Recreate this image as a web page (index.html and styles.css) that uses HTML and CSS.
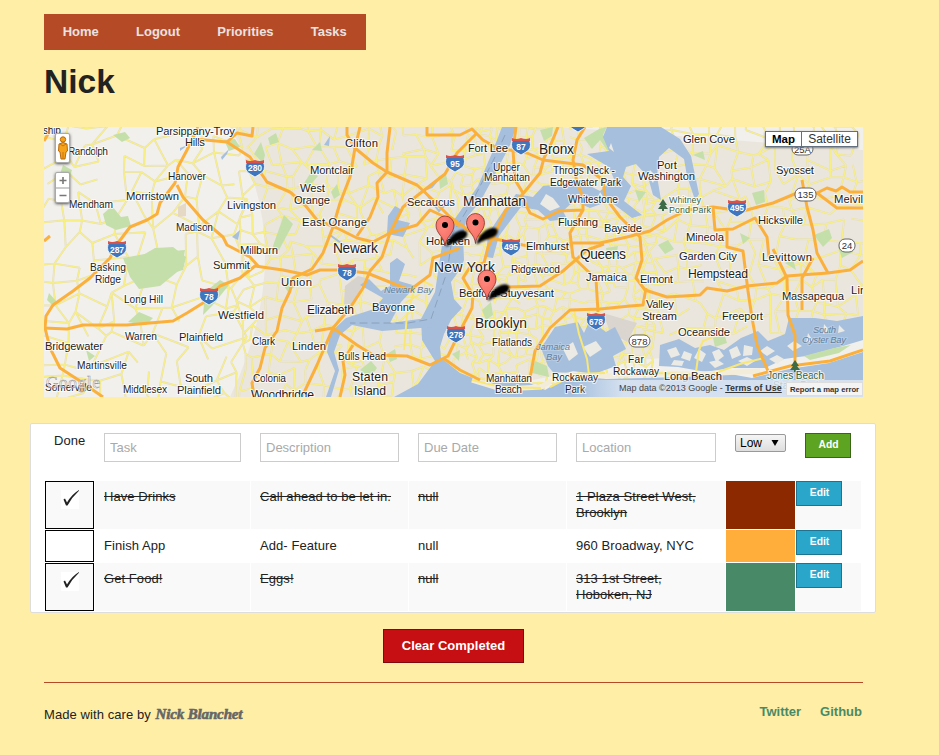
FILE: index.html
```html
<!DOCTYPE html>
<html lang="en">
<head>
<meta charset="utf-8">
<title>Nick</title>
<link rel="stylesheet" href="styles.css">
</head>
<body>
<div class="page">
<nav class="nav"><a>Home</a><a>Logout</a><a>Priorities</a><a>Tasks</a></nav>
<h1>Nick</h1>
<div class="map">
<svg class="map-canvas" width="819" height="270" viewBox="44 127 819 270">
<defs>
<radialGradient id="marker" cx=".4" cy=".3" r=".8"><stop offset="0" stop-color="#ff8c80"/><stop offset="1" stop-color="#f4645b"/></radialGradient>
<filter id="soft"><feGaussianBlur stdDeviation=".8"/></filter>
<g id="shield"><path d="M-9-4Q-6-6-4-5Q0-7 4-5Q6-6 9-4Q11 4 5 7L0 10L-5 7Q-11 4-9-4Z" fill="#3f76bd" stroke="#fff" stroke-width=".8"/><path d="M-9-7Q-5-5 0-7Q5-5 9-7L9-4H-9Z" fill="#d8524c"/></g>
<g id="pin"><path d="M1 1Q2-7 10-13Q18-18 22-14Q24-8 14-5Q7-3 1 1Z" fill="#000" filter="url(#soft)"/><path d="M0 0C-1-10-9-12-9-21A9 9 0 0 1 9-21C9-12 1-10 0 0Z" fill="url(#marker)" stroke="#8e302b" stroke-width=".8"/><circle cy="-21" r="3" fill="#000"/></g>
<path id="tree" d="M0-6L4 0H2L5 4H1V6H-1V4H-5L-2 0H-4Z" fill="#3c6b45"/>
</defs>
<rect x="44" y="127" width="819" height="270" fill="#f2f0ec"/>
<path d="M230 127H560L863 150V340L640 360L440 397H230Q300 250 230 127Z" fill="#ebe6dd"/>
<g id="minor" class="minor"></g>
<g class="park">
<path d="M103 214L112 206L121 217L128 216L131 226L116 230L106 225Z"/><path d="M123 258L150 253L185 250L182 268L160 286L139 289L130 277Z"/><path d="M138 258L155 248L173 247L186 257L183 270L150 280Z"/>
<path d="M224 140L235 139L240 147L229 151Z"/><path d="M254 154L261 142L265 155L263 163Z"/><path d="M275 240L284 215L293 224L279 250L270 255Z"/><path d="M63 165L72 170L70 176L60 174Z"/><path d="M113 135L125 132L130 138L122 142Z"/>
<path d="M49 293L56 301L54 307L47 300Z"/><path d="M86 350L95 356L89 361Z"/><path d="M128 322L139 312L153 318L146 325Z"/><path d="M205 292L220 280L229 285L212 306L203 315Z"/><path d="M303 185L311 172L318 176L307 189Z"/><path d="M268 138L276 133L279 142L270 145Z"/>
<path d="M284 286L290 279L296 286L288 292Z"/><path d="M312 150L320 142L322 151Z"/><path d="M331 192L337 184L340 195L334 199Z"/><path d="M439 178L446 174L448 184L440 189Z"/><path d="M540 130L553 127L552 136L544 141Z"/><path d="M584 138L599 129L607 127L603 135L613 152L607 150L600 140L592 149Z"/><path d="M482 310L491 302L493 315L486 320Z"/><path d="M360 370L371 361L377 368L370 378Z"/><path d="M387 354L395 349L397 359L390 362Z"/><path d="M452 354L460 350L459 361Z"/><path d="M635 190L646 192L639 202Z"/><path d="M752 193L764 190L765 202L756 205Z"/><path d="M814 235L829 229L832 238L823 247Z"/><path d="M713 338L724 333L727 343L715 347Z"/><path d="M785 263L793 259L796 270Z"/><path d="M740 233L750 238L743 244Z"/><path d="M693 155L703 151L705 160Z"/><path d="M838 247L851 243L853 252L842 258Z"/><path d="M658 245L668 240L674 249L665 254Z"/><path d="M606 248L618 246L616 257L607 257Z"/>
</g>
<path d="M345 286L358 276L366 278L350 309L344 304Z" fill="#d6d2ce"/><path d="M603 313L637 323L627 342L610 332Z" fill="#dad5ce"/><path d="M178 207L186 203L186 216L178 217Z" fill="#e5d9c5"/>
<g class="water">
<path d="M502 127H516L510 145L493 178L480 202L467 217L463 236L464 260L461 268L451 282L454 299L462 308L451 320L444 334L440 347L441 358L460 373L483 382L529 383L545 390L573 374L606 379L682 377L730 374L752 378L789 369L829 363L863 352V397H394L418 384L435 361L422 340L421 319L435 292L442 245L454 220L478 186L492 153Z"/>
<path d="M360 285L369 279L381 291L390 286L390 263L397 258L405 264L399 281L416 286L401 302L390 323L434 317L433 327L382 331L352 325L340 335L334 352L339 370L331 397H326L335 371L327 352L330 333L346 318L374 309L383 298Z"/>
<path d="M607 127H661L680 139L691 156L699 194L695 200L687 176L684 159L669 148L659 157L657 176L661 200L653 195L648 177L636 164L626 167L623 177L631 186L624 201L642 215L632 218L611 202L601 204L590 208L574 201L563 211L567 219L550 221L538 210L521 207L511 220L499 236L493 258L486 257L488 234L504 210L516 194L533 197L543 186L562 184L580 181L600 191L614 179L609 167L587 154L609 151L603 137Z"/>
<path d="M555 327L578 322L584 333L590 320L606 332L615 327L626 349L613 356L616 366L594 374L573 371L556 376L548 366L541 348Z"/>
<path d="M388 216L395 206L402 210L398 220L410 223L403 237L387 234Z"/><path d="M221 157L229 149L227 154L222 160Z"/><path d="M232 237L240 230L238 240Z"/><path d="M324 145L330 136L329 146Z"/><path d="M180 148L188 145L180 151Z"/>
<path d="M660 345L679 339L695 348L710 345L724 350L741 338L758 331L768 341L785 334L789 318L815 318L837 321L863 316V340L843 346L806 356L784 359L765 368L730 368L706 372L678 367L659 366Z"/>
</g>
<path d="M440 177L432 187L424 190L432 202L439 211L447 203M330 235L345 246" fill="none" stroke="#a5bfdd" stroke-width="2"/>
<g class="islands"><path d="M540 204L546 194L553 198L560 207L550 211Z"/><path d="M563 349L573 342L578 354L569 361Z"/><path d="M583 347L596 341L602 349L590 357Z"/><path d="M667 350l9-3 4 8-9 3zM684 351l8 3-2 7-9-3zM699 349l7 5-4 8-8-4zM712 352l7-3 5 7-8 6zM729 350l8-4 4 9-9 4zM744 345l9 2-1 8-9 1zM760 351l7-5 8 5-8 5zM674 360l10 1-2 5-11-1zM709 362l9-2 6 4-9 4zM738 361l9-4 8 4-8 5zM769 359l8-4 7 4-7 5zM787 346l7-5 8 5-9 5zM808 333l5 8-7 2zM824 324l6 7-7 3zM839 325l6 6-7 2z"/><path d="M600 192L604 198L598 198ZM611 143l3 9-5-4zM650 170l6 6-3 7-5-7z"/></g>
<path class="park" d="M804 356L834 348L851 345L839 353L810 360Z"/><path class="park" d="M535 361L547 366L549 377L532 373Z"/>
<path d="M472 380L501 389L541 387L560 375L602 376L650 373L700 374L760 371" fill="none" stroke="#f3ecd9" stroke-width="5"/>
<path d="M472 380L501 387L541 388M550 387L575 374L605 373M655 373L710 375L740 364L764 358M720 334L703 341L699 350L696 372M574 310L579 334L587 359L589 375M416 285L407 315L404 350M423 281L433 286M405 303L420 294" class="secondary"/>
<path d="M505 135L494 159L473 200L453 233L447 272L431 319L408 323L350 323" class="boundary"/>
<g class="highway">
<path d="M198 127L187 150L178 167L175 183L160 203L157 214L147 220L130 227L118 243L110 258L90 278L73 291L53 305L46 316L45 328L50 348L60 368L80 381L103 397"/>
<path d="M194 139L227 142L250 157L267 182L290 192L305 205L317 220L337 228L357 238L373 242L390 233L417 225L430 210L445 217L460 226"/>
<path d="M44 328L67 329L83 325L127 325L173 321L187 313L203 303L220 286L240 278L255 266L283 270L307 275L320 270L340 270L367 273L397 285L410 290L430 275L433 258L460 248"/>
<path d="M177 185L183 197L203 220L223 237L227 245L250 257L259 267M227 142L237 133L252 136L253 127"/>
<path d="M360 127L355 148L350 177L340 203L333 227L323 253L312 269L293 278L290 291L282 308L277 331L265 348L260 368L252 383L254 397"/>
<path d="M347 127L347 135L355 148L373 163L387 172L417 185L433 200L450 217L475 235L500 240L523 245L550 250L573 243L600 243L627 237L650 231L667 220L687 210L713 207L743 211L773 203L797 193L817 193L837 208L863 208"/>
<path d="M390 127L387 153L387 172L377 183L378 197L370 217L357 236M427 127L427 135L460 135L472 129L483 140L497 148L527 153L543 160L583 165L603 180L605 197L620 217L640 237L642 260L636 278L645 290L667 297L700 295L707 288L727 291L747 286L777 283L787 276L828 273L850 270L863 261"/>
<path d="M476 134L457 153L445 174L418 195L403 207L390 233L382 257L370 271L363 288L350 308L333 328L317 365L302 397"/>
<path d="M315 331L333 328L357 345L373 355L407 356L430 365L448 356L460 331L472 308L473 295L463 278L470 267L484 263L488 247L506 210L522 195L540 173L544 158L551 144L558 127"/>
<path d="M353 345L343 361L345 375L340 397M516 127L513 150L515 180L523 193M585 127L577 140L573 160L577 183L583 197L583 210L570 233L573 257L596 279L598 312M583 210L559 211L543 219L530 213L522 197"/>
<path d="M443 358L460 370L480 380M530 378L535 351L550 328L570 310L600 309L630 306L643 305L646 288M493 298L505 287L540 286L563 271L587 250L604 244"/>
<path d="M817 193L827 188L836 191L842 187L850 192L863 192M713 207L715 230L733 229L755 218L767 237L769 257M727 230L727 247L743 251L748 291L752 318L757 345L768 371M802 180L807 207L813 230L817 253L828 273M773 249L787 278L788 315L795 335L795 365M813 258L802 278L802 310M753 376L790 366L830 361L863 350M44 241L50 236M44 141L52 127"/>
</g>
<g><use href="#shield" x="255" y="167"/><use href="#shield" x="117" y="248"/><use href="#shield" x="347" y="271"/><use href="#shield" x="209" y="295"/><use href="#shield" x="455" y="162"/><use href="#shield" x="521" y="145"/><use href="#shield" x="511" y="246"/><use href="#shield" x="737" y="207"/><use href="#shield" x="456" y="333"/><use href="#shield" x="596" y="320"/><use href="#shield" x="578" y="122"/></g>
<g class="shield-text"><text x="255" y="171">280</text><text x="117" y="253">287</text><text x="347" y="276">78</text><text x="209" y="300">78</text><text x="455" y="167">95</text><text x="521" y="150">87</text><text x="511" y="250">495</text><text x="737" y="211">495</text><text x="456" y="338">278</text><text x="596" y="325">678</text></g>
<g class="route"><rect x="792" y="143" width="21" height="12" rx="6"/><rect x="795" y="188" width="21" height="13" rx="6"/><rect x="839" y="239" width="16" height="13" rx="6"/><rect x="629" y="335" width="21" height="12" rx="6"/></g>
<g class="route-text"><text x="802.5" y="153">25A</text><text x="805.5" y="198">135</text><text x="847" y="249">24</text><text x="639.5" y="345">878</text></g>
<use href="#tree" x="663" y="205"/><use href="#tree" x="795" y="366"/>
<g class="labels">
<g class="s10">
<text x="43" y="134" textLength="18">ship</text><text x="68" y="154.500" textLength="40">Randolph</text><text x="168" y="180" textLength="38">Hanover</text><text x="69" y="207.500" textLength="44">Mendham</text><text x="176" y="231" textLength="37">Madison</text><text x="90" y="271" textLength="36">Basking</text><text x="95" y="283" textLength="26">Ridge</text><text x="124" y="303" textLength="39">Long Hill</text><text x="125" y="340" textLength="32">Warren</text><text x="77" y="369" textLength="50">Martinsville</text><text x="45" y="391" textLength="47">Somerville</text><text x="123" y="393" textLength="44">Middlesex</text><text x="252" y="345" textLength="23">Clark</text><text x="253" y="382" textLength="33">Colonia</text><text x="338" y="360" textLength="48">Bulls Head</text><text x="493" y="170.500" textLength="27">Upper</text><text x="484" y="181" textLength="46">Manhattan</text><text x="553" y="174" textLength="62">Throgs Neck -</text><text x="550" y="185.500" textLength="71">Edgewater Park</text><text x="568" y="203" textLength="50">Whitestone</text><text x="511" y="273" textLength="49">Ridgewood</text><text x="492" y="346" textLength="40">Flatlands</text><text x="486" y="382" textLength="46">Manhattan</text><text x="495" y="393" textLength="27">Beach</text><text x="552" y="381" textLength="46">Rockaway</text><text x="565" y="393" textLength="20">Park</text><text x="628" y="363" textLength="16">Far</text><text x="613" y="375" textLength="46">Rockaway</text>
</g>
<g class="s11">
<text x="156" y="134.500" textLength="79">Parsippany-Troy</text><text x="185" y="146" textLength="20">Hills</text><text x="126" y="200" textLength="53">Morristown</text><text x="227" y="209" textLength="49">Livingston</text><text x="240" y="254" textLength="38">Millburn</text><text x="213" y="269" textLength="37">Summit</text><text x="218" y="319" textLength="46">Westfield</text><text x="179" y="340.500" textLength="44">Plainfield</text><text x="45" y="349.500" textLength="58">Bridgewater</text><text x="185" y="382" textLength="28">South</text><text x="177" y="394" textLength="44">Plainfield</text><text x="310" y="174" textLength="44">Montclair</text><text x="300" y="192" textLength="25">West</text><text x="294" y="203.500" textLength="36">Orange</text><text x="407" y="205.500" textLength="48">Secaucus</text><text x="345" y="146.500" textLength="33">Clifton</text><text x="302" y="225.500" textLength="65">East Orange</text><text x="281" y="286" textLength="31">Union</text><text x="292" y="350" textLength="34">Linden</text><text x="372" y="311" textLength="43">Bayonne</text><text x="468" y="152" textLength="40">Fort Lee</text><text x="426" y="245" textLength="44">Hoboken</text><text x="558" y="226" textLength="40">Flushing</text><text x="604" y="232" textLength="38">Bayside</text><text x="526" y="250" textLength="43">Elmhurst</text><text x="459" y="296.500" textLength="95">Bedford-Stuyvesant</text><text x="586" y="281" textLength="41">Jamaica</text><text x="640" y="283" textLength="33">Elmont</text><text x="646" y="307.500" textLength="28">Valley</text><text x="642" y="319.500" textLength="35">Stream</text><text x="683" y="142.500" textLength="52">Glen Cove</text><text x="657" y="168.500" textLength="20">Port</text><text x="638" y="180" textLength="57">Washington</text><text x="776" y="174" textLength="38">Syosset</text><text x="834" y="202.500" textLength="38">Melville</text><text x="758" y="224" textLength="45">Hicksville</text><text x="686" y="240.500" textLength="38">Mineola</text><text x="679" y="260" textLength="58">Garden City</text><text x="762" y="261" textLength="50">Levittown</text><text x="782" y="300" textLength="62">Massapequa</text><text x="851" y="294" textLength="60">Lindenhurst</text><text x="722" y="320" textLength="41">Freeport</text><text x="678" y="336" textLength="52">Oceanside</text><text x="664" y="380" textLength="58">Long Beach</text>
</g>
<g class="s12">
<text x="688" y="278" textLength="60">Hempstead</text><text x="307" y="314" textLength="47">Elizabeth</text><text x="352" y="381" textLength="36">Staten</text><text x="354" y="395" textLength="32">Island</text><text x="251" y="399" textLength="63">Woodbridge</text>
</g>
<g class="s13"><text x="333" y="253" textLength="45">Newark</text><text x="463" y="206" textLength="63">Manhattan</text><text x="539" y="154" textLength="35">Bronx</text><text x="580" y="259" textLength="46">Queens</text><text x="434" y="271.500" textLength="61">New York</text><text x="475" y="328" textLength="52">Brooklyn</text></g>
<g class="park-label"><text x="669" y="203" textLength="32">Whitney</text><text x="669" y="213" textLength="42">Pond Park</text><text x="767" y="379" class="beach" textLength="57">Jones Beach</text><text x="773" y="389" class="beach">State Park</text></g>
<g class="bay-label"><text x="384" y="293" textLength="49">Newark Bay</text><text x="536" y="350" textLength="34">Jamaica</text><text x="546" y="360" textLength="16">Bay</text><text x="813" y="333" textLength="23">South</text><text x="802" y="343" textLength="44">Oyster Bay</text></g>
</g>
<use href="#pin" x="445" y="246"/><use href="#pin" x="475.500" y="243.500"/><use href="#pin" x="487" y="300"/>
<text class="brand" x="46" y="388" textLength="54">Google</text>
</svg>
<div class="control pegman"><svg width="14" height="28" viewBox="0 0 14 28"><path d="M3 10Q7 7 11 10L11.500 17L10 18L9 25H5L4 18L2.500 17Z" fill="#f5a31b" stroke="#b96a0b"/><circle cx="7" cy="5.500" r="2.700" fill="#f5a31b" stroke="#b96a0b"/><path d="M4 10L7 12L10 10M7 18V25" fill="none" stroke="#c7740c"/></svg></div>
<div class="control zoom-control"><svg width="14" height="30" viewBox="0 0 14 30"><path d="M0 15H14" stroke="#999"/><path d="M3.500 7.500H10.500M7 4V11M3.500 22.500H10.500" stroke="#777" stroke-width="1.600"/></svg></div>
<div class="map-type"><b>Map</b><span>Satellite</span></div>
<div class="attribution"><span>Map data ©2013 Google - <b>Terms of Use</b></span></div><div class="report">Report a map error</div>
</div>
<div class="tasks">
<form class="new-task">
<span class="done-head">Done</span>
<div class="field"><input placeholder="Task"></div><div class="field"><input placeholder="Description"></div><div class="field"><input placeholder="Due Date"></div><div class="field"><input placeholder="Location"></div>
<div class="priority"><span class="select">Low<svg width="8" height="6" viewBox="0 0 8 6"><path d="M.5 0H7.500L4 6Z"/></svg></span></div>
<div class="add-cell"><button type="button" class="btn add">Add</button></div>
</form>
<div class="row striped completed"><div class="check"><svg width="18" height="19"><rect width="18" height="19" fill="#fff"/><path d="M2.500 9.500L4 8.500L6 12.500Q11 4 18 0V.7Q11 7 6.500 15.500H5Z" fill="#222"/></svg></div><div>Have Drinks</div><div>Call ahead to be let in.</div><div>null</div><div>1 Plaza Street West, Brooklyn</div><div class="color high"></div><div class="action"><button class="btn">Edit</button></div></div>
<div class="row"><div class="check"></div><div>Finish App</div><div>Add- Feature</div><div>null</div><div>960 Broadway, NYC</div><div class="color medium"></div><div class="action"><button class="btn">Edit</button></div></div>
<div class="row striped completed"><div class="check"><svg width="18" height="19"><rect width="18" height="19" fill="#fff"/><path d="M2.500 9.500L4 8.500L6 12.500Q11 4 18 0V.7Q11 7 6.500 15.500H5Z" fill="#222"/></svg></div><div>Get Food!</div><div>Eggs!</div><div>null</div><div>313 1st Street, Hoboken, NJ</div><div class="color low"></div><div class="action"><button class="btn">Edit</button></div></div>
</div>
<button class="clear">Clear Completed</button>
<footer><div class="credit">Made with care by <span class="author">Nick Blanchet</span></div><div class="social"><a>Twitter</a><a>Github</a></div></footer>
</div>
<script src="roads.js"></script>
</body>
</html>
```
FILE: styles.css
```css
* { box-sizing: border-box; }
body { margin: 0; background: #ffeea5; color: #222; font: 13px/16px "Liberation Sans", Arial, sans-serif; }
.page { width: 819px; margin: 14px 0 0 44px; }
.nav { display: flex; width: 322px; height: 36px; background: #b54a26; line-height: 36px; }
.nav a { padding: 0 18.5px 0 18.7px; font-weight: bold; color: #ece2e0; }
h1 { margin: 12px 0 0; font-size: 33.5px; line-height: 40px; height: 65px; }
.map { position: relative; height: 270px; overflow: hidden; }
.map-canvas { display: block; }
.park { fill: #c5dfab; }
.water { fill: #a5bfdd; }
.islands { fill: #ebeae4; }
.minor { fill: none; stroke: #f8ef82; stroke-width: 1.2; }
.minor .casing { stroke: #e3ddc9; stroke-width: 2; }
.secondary { fill: none; stroke: #f8e776; stroke-width: 2; }
.boundary { fill: none; stroke: #8296ad; stroke-width: 1; stroke-dasharray: 8 4; opacity: .7; }
.highway { fill: none; stroke: #fbb03c; stroke-width: 3; stroke-linejoin: round; }
.shield-text, .route-text { font-size: 8.5px; font-weight: bold; text-anchor: middle; fill: #fff; }
.route-text { fill: #333; font-weight: normal; font-size: 9.5px; }
.route { fill: #fff; stroke: #666; }
.labels { fill: #222; stroke: #fff; stroke-opacity: .75; stroke-width: 2.2px; stroke-linejoin: round; paint-order: stroke; }
.s10 { font-size: 10.2px; }
.s11 { font-size: 11.3px; }
.s12 { font-size: 12.2px; }
.s13 { font-size: 13.8px; }
.park-label { fill: #34633e; font-size: 9px; }
.park-label .beach { font-size: 10.3px; }
.bay-label { fill: #60809f; font-size: 9.5px; font-style: italic; stroke-opacity: .2; }
.brand { font: 17px "Liberation Serif", serif; fill: #fff; fill-opacity: .8; stroke: #999; stroke-width: .5; }
.control { position: absolute; left: 11px; background: #fff; border: 1px solid #aaa; border-radius: 2px; box-shadow: 0 1px 3px #555; }
.control svg { display: block; }
.pegman { top: 6px; width: 15px; height: 30px; }
.zoom-control { top: 45px; width: 15px; height: 31px; }
.map-type { position: absolute; top: 4px; right: 5px; width: 93px; height: 16px; border: 1px solid #63707f; background: #fff; display: flex; font-size: 12px; line-height: 14px; color: #333; box-shadow: 0 1px 2px #777; }
.map-type b { width: 36px; font-size: 11.5px; text-align: center; color: #000; border-right: 1px solid #63707f; }
.map-type span { flex: 1; text-align: center; }
.attribution { position: absolute; right: 0; bottom: 0; height: 17px; width: 290px; padding-left: 46px; background: linear-gradient(90deg, #e6edf500, #e0e9f4cc 50px); font-size: 9px; line-height: 16px; color: #444; white-space: nowrap; }
.attribution b { font-size: 8.8px; letter-spacing: .12px; text-decoration: underline; color: #333; }
.report { position: absolute; right: 0; bottom: 1px; width: 77px; height: 14px; border: 1px solid #ddd; background: #f4f4f4; font-size: 7.7px; line-height: 13px; font-weight: bold; text-align: center; white-space: nowrap; color: #333; }
.tasks { width: 846px; margin: 26px 0 0 -14px; padding: 0 14px 1px; background: #fff; border: 1px solid #ddd; border-radius: 2px; height: 190px; }
.new-task, .row { display: grid; grid-template-columns: 49px 155px 157px 157px 158px 69px 65px; column-gap: 1px; }
.new-task { height: 57px; }
.done-head { padding: 9px; letter-spacing: .06px; }
.field { padding: 9px 9px 0; }
input { width: 100%; height: 29px; padding: 0 5px; border: 1px solid #ccc; font: 13px "Liberation Sans", Arial, sans-serif; background: #fff; }
input::placeholder { color: #a9a9a9; opacity: 1; }
.priority { padding: 10px 0 0 9px; }
.select { display: flex; align-items: center; justify-content: space-between; width: 51px; height: 18px; padding: 0 6px 0 4px; border: 1px solid #999; border-radius: 2px; background: linear-gradient(#f5f5f5, #dedede); color: #000; font-size: 12px; }
.add-cell { padding: 9px; }
.row { min-height: 32px; margin-bottom: 1px; letter-spacing: .07px; }
.row > div { padding: 8px 9px; line-height: 16px; }
.striped > div { background: #f9f9f9; }
.completed > div:not(.action) { text-decoration: line-through; }
.row > .check { border: 1px solid #000; padding: 8px 0 0 15px; }
.check svg { display: block; }
.row > .action { padding: 0; }
.row > .high { background: #8c2900; }
.row > .medium { background: #ffae3c; }
.row > .low { background: #488a67; }
.btn { display: block; width: 46px; height: 25px; padding: 0 0 2px 1px; border: 1px solid #1e7391; background: #2ba6cb; color: #fff; font: bold 10.3px "Liberation Sans", Arial, sans-serif; text-align: center; }
.add { background: #5da423; border-color: #396516; }
.clear { display: block; width: 141px; height: 34px; margin: 16px 0 0 339px; padding: 0 0 1px; background: #c60f13; border: 1px solid #7f0a0c; color: #fff; font: bold 13px "Liberation Sans", Arial, sans-serif; }
footer { margin-top: 19px; padding-top: 21px; border-top: 1px solid #b54a26; display: flex; justify-content: space-between; line-height: 20px; }
.credit { padding-top: 1px; letter-spacing: .08px; }
.author { margin-left: 1px; font: italic bold 15px "Liberation Serif", serif; letter-spacing: -.15px; color: #666; -webkit-text-stroke: .6px #666; }
.social { display: flex; gap: 19px; line-height: 16px; padding-right: 1px; }
.social a { color: #488a67; font-weight: bold; }
```
FILE: roads.js
```js
// Fills the land with a seeded, irregular network of local streets.
let seed = 41;
const random = () => (seed = (seed * 16807) % 2147483647) / 2147483647;
const group = document.getElementById("minor");
function network(x0, y0, x1, y1, step, keep) {
  const points = [];
  for (let y = y0; y <= y1; y += step) {
    const line = [];
    for (let x = x0; x <= x1; x += step) {
      line.push([x + (random() - 0.5) * step * 0.9, y + (random() - 0.5) * step * 0.9]);
    }
    points.push(line);
  }
  let d = "";
  points.forEach((line, r) => line.forEach((p, c) => {
    const near = [line[c + 1], points[r + 1] && points[r + 1][c]];
    near.forEach(q => { if (q && random() < keep) d += `M${p}L${q}`; });
  }));
  for (const name of ["casing", "street"]) {
    const path = document.createElementNS("http://www.w3.org/2000/svg", "path");
    path.setAttribute("d", d);
    path.setAttribute("class", name);
    group.appendChild(path);
  }
}
network(40, 120, 250, 405, 20, 0.72);
network(240, 120, 450, 405, 14, 0.78);
network(455, 120, 655, 390, 9, 0.78);
network(645, 120, 870, 340, 15, 0.82);
```
